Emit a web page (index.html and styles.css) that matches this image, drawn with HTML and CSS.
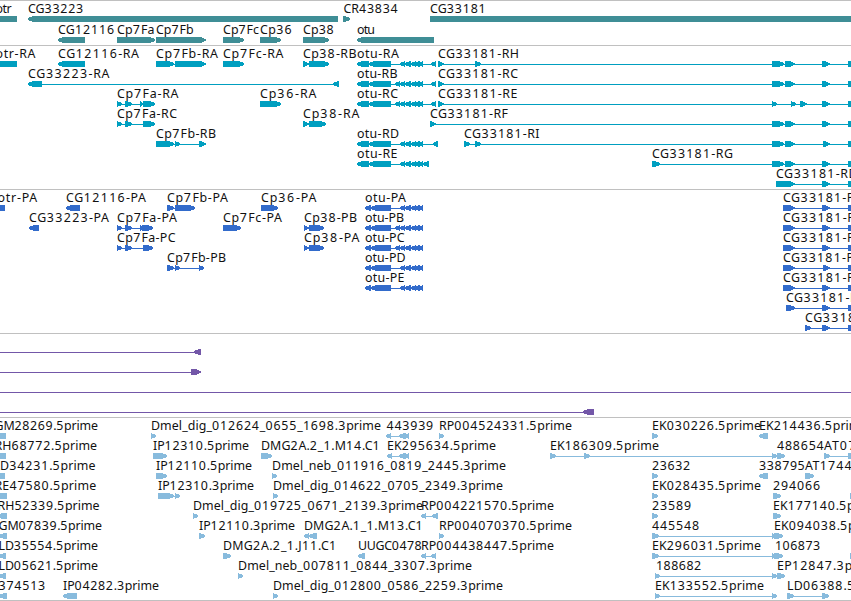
FILE: index.html
```html
<!DOCTYPE html>
<html lang="en">
<head>
<meta charset="utf-8">
<title>Genome browser</title>
<link rel="stylesheet" href="styles.css">
</head>
<body>
<main class="browser" id="browser"></main>
<script src="tracks.js"></script>
</body>
</html>
```
FILE: styles.css
```css
body {
  margin: 0;
  background: #fff;
}

.browser {
  display: flex;
  flex-direction: column;
  width: 851px;
  height: 601px;
  overflow: hidden;
  box-sizing: border-box;
  border-bottom: 1px solid #c0c0c0;
}

.track {
  display: flex;
  flex-direction: column;
  border-top: 1px solid #c0c0c0;
  padding: 1px 0 2px;
}

.row {
  display: block;
  width: 851px;
  height: 20px;
  overflow: visible;
  fill: currentColor;
}

.row path,
.row rect {
  shape-rendering: crispEdges;
}

.label {
  font: 12.4px "Noto Sans", "Open Sans", sans-serif;
  fill: #111;
}

.digits {
  letter-spacing: 0.8px;
}

.genes { color: #3f8e96; padding-bottom: 1px; }
.genes .row { height: 21px; }
.transcripts { color: #009fc0; }
.proteins { color: #326bcb; }
.inserts { color: #7357a8; }
.reads { color: #88bbdd; padding-bottom: 1px; }
```
FILE: tracks.js
```js
// Feature: "label labelStart labelEnd strand block,block,..."; a block is start:end.
const OTU = '357:369,369:391,';
const OTP = '365:371,371:391,';
const TAIL = '400:405,405:411,411:416,415:419.5,419:423';
const TAIL5 = '395:400,' + TAIL;
const END = '822:829.5,848:856';
const MID = '772:784,785:794.5,' + END;
const PEP = '783:785,784:794.5,' + END;

const tracks = [
  ['genes', [
    ['otr -4 11 < -10:17', 'CG33223 28.5 83.5 < 28:338', 'CR43834 344 398 > 343:350', 'CG33181 430.5 486 > 430:900'],
    ['CG12116 58.5 114.5 < 58:85', 'Cp7Fa 117.5 154 > 117:155', 'Cp7Fb 156.5 193 > 156:205.5', 'Cp7Fc 223.5 258.5 > 223:244', 'Cp36 260.5 292 > 260:281', 'Cp38 303.5 334 > 303:329', 'otu 357.5 374.5 < 357:434']
  ]],
  ['transcripts', [
    ['otr-RA -4 35 < -10:17', 'CG12116-RA 58.5 138.5 < 58:85', 'Cp7Fb-RA 156.5 217.5 > 156:174,175:205.5', 'Cp7Fc-RA 223.5 283 > 223:225,224:244', 'Cp38-RB 303.5 356 > 303:308.5,309:329', 'otu-RA 357.5 398.5 < ' + OTU + TAIL + ',431:436', 'CG33181-RH 438.5 518.5 > 438:443.5,475:481,' + MID],
    ['CG33223-RA 28.5 109 < 28:42,333:339', 'otu-RB 357.5 397 < ' + OTU + TAIL5 + ',431:436', 'CG33181-RC 438.5 517.5 > 438:443.5,' + MID],
    ['Cp7Fa-RA 117.5 178 > 117:122,125:132,140:143,143:155', 'Cp36-RA 260.5 316 > 260:262,261:281', 'otu-RC 357.5 397.5 < ' + OTU + TAIL5 + ',431:436', 'CG33181-RE 438.5 517 > 438:443.5,772:777,791:796,800:806.5,' + END],
    ['Cp7Fa-RC 117.5 176.5 > 117:122,125:132,143:155', 'Cp38-RA 303.5 359 > 303:308.5,309:326', 'CG33181-RF 430.5 507.5 > 430:435.5,' + MID],
    ['Cp7Fb-RB 156.5 215.5 > 156:174,175:180,199:205.5', 'otu-RD 357.5 398.5 < ' + OTU + TAIL + ',432.5:438', 'CG33181-RI 464.5 539 > 464:470,475:481,772:784,785:794.5,823:829.5,848:856'],
    ['otu-RE 357.5 397 < ' + OTU + TAIL + ',423:429', 'CG33181-RG 652.5 732.5 > 652:660,' + MID],
    ['CG33181-RD 776.5 857 > 776:794.5,' + END]
  ]],
  ['proteins', [
    ['otr-PA -2 36.7 < -10:5', 'CG12116-PA 66.5 145.5 < 66:80', 'Cp7Fb-PA 167.5 227.5 > 167:174,175:195', 'Cp36-PA 261.5 316 > 261:278', 'otu-PA 365.5 405.5 < ' + OTP + TAIL, 'CG33181-PH 783.5 863.5 > ' + PEP],
    ['CG33223-PA 29.5 108.5 < 29:39', 'Cp7Fa-PA 117.5 176.5 > 117:122,125:132,140:143,142:153', 'Cp7Fc-PA 223.5 281.5 > 223:241', 'Cp38-PB 304.5 356.5 > 304:308.5,308.5:324', 'otu-PB 365.5 403.5 < ' + OTP + TAIL5, 'CG33181-PC 783.5 862.5 > ' + PEP],
    ['Cp7Fa-PC 117.5 175 > 117:122,125:132,143:153', 'Cp38-PA 304.5 359 > 304:308.5,308.5:324', 'otu-PC 365.5 404 < ' + OTP + TAIL5, 'CG33181-PF 783.5 861 > ' + PEP],
    ['Cp7Fb-PB 167.5 225.5 > 167:174,175:180,199:204', 'otu-PD 365.5 405 < ' + OTP + TAIL, 'CG33181-PI 783.5 858 > 783:785,784:794.5,823:829.5,848:856'],
    ['otu-PE 365.5 404 < ' + OTP + TAIL, 'CG33181-PG 783.5 863.5 > ' + PEP],
    ['CG33181-PD 786.5 866.5 > 786:795,' + END],
    ['CG33181-PE 805.5 884 > 805:811,' + END]
  ]],
  ['inserts', [
    ['- 0 0 < -10:-5,194:201'],
    ['- 0 0 > -10:-5,191:200.5'],
    ['- 0 0 > -10:-5,860:870'],
    ['- 0 0 < -10:-5,583:593.5']
  ]],
  ['reads', [
    ['GM28269.5prime -5 97.5 < -10:6', 'Dmel_dig_012624_0655_1698.3prime 151.5 380.5 > 151:156', '443939 387 433.5 < 386:391,399:406,405:409', 'RP004524331.5prime 439.5 571.5 > 439:444', 'EK030226.5prime 652.5 760.5 > 652:658', 'EK214436.5prime 759.5 867 < 759:768'],
    ['RH68772.5prime -5 96.5 < -10:6', 'IP12310.5prime 153.5 248.5 > 153:167', 'DMG2A.2_1.M14.C1 261.5 380 > 261:272', 'EK295634.5prime 387.5 495.5 < 387:392,399:406,405:409', 'EK186309.5prime 550.5 658.5 > 550:556,584:590,772:777', '488654 777.5 824 > 777:785', 'AT07 824.5 856 > 824:830,848:856'],
    ['LD34231.5prime -6 95 < -10:5', 'IP12110.5prime 156.5 251.5 > 156:167', 'Dmel_neb_011916_0819_2445.3prime 272.5 505.5 > 272:277', '23632 652.5 690.5 > 652:658', '338795 759.5 805 < 759:768', 'AT1744 805.5 852 > 805:814'],
    ['RE47580.5prime -5 95.7 < -10:7', 'IP12310.3prime 158.5 253.5 > 158:174,175:180', 'Dmel_dig_014622_0705_2349.3prime 273.5 502.5 > 273:278', 'EK028435.5prime 652.5 760.5 > 652:658', '294066 773.5 820.5 > 773:781', '- 0 0 > 850:858'],
    ['RH52339.5prime -2 99 < -3:7', 'Dmel_dig_019725_0671_2139.3prime 193.5 422.5 > 193:198', 'RP004221570.5prime 421.5 553.5 < 421:426,432:438', '23589 652.5 691.5 > 652:658', 'EK177140.5prime 773.5 881.5 > 773:781'],
    ['GM07839.5prime -1 101.5 < -1:7', 'IP12110.3prime 199.5 294.5 > 199:205', 'DMG2A.1_1.M13.C1 304.5 423 < 304:309,309:317', 'RP004070370.5prime 439.5 571.5 > 439:444', '445548 652.5 699.5 > 652:659,772:777', 'EK094038.5prime 774.5 882.5 > 774:783'],
    ['LD35554.5prime -1 97.5 < -1:6', 'DMG2A.2_1.J11.C1 223.5 336.5 > 223:231', 'UUGC0478 358.5 422 < 358:365', 'RP004438447.5prime 421.5 553.5 < 421:426,431:436', 'EK296031.5prime 652.5 760.5 > 652:659,772:777', '106873 775.5 820.5 > 774:783', '- 0 0 > 850:858'],
    ['LD05621.5prime -1 97.5 < -1:6', 'Dmel_neb_007811_0844_3307.3prime 238.5 471.5 > 238:243', '188682 656.5 701.5 > 655:660,772:777', 'EP12847.3prime 777.5 880 > 777:785'],
    ['374513 -1 45.5 < -1:7', 'IP04282.3prime 63.5 158.5 < 63:77', 'Dmel_dig_012800_0586_2259.3prime 273.5 502.5 > 273:278', 'EK133552.5prime 655.5 763.5 > 655:660,772:777', 'LD06388.5prime 787.5 890 > 787:794,822:829']
  ]]
];

const BASELINE = 11, TOP = 14, BOTTOM = 20, MIDDLE = 17, TIP = 5;

// A bar whose leading end narrows to a blunt, two pixel high nose.
function blockPath(strand, a, b) {
  const tip = Math.min(TIP, b - a);
  const [flat, nose, neck] = strand === '>' ? [a, b, b - tip] : [b, a, a + tip];
  return `M${flat} ${TOP}H${neck}L${nose} ${MIDDLE - 1}V${MIDDLE + 1}L${neck} ${BOTTOM}H${flat}z`;
}

function feature(spec) {
  const [name, from, to, strand, list] = spec.split(' ');
  const blocks = list.split(',').map(s => s.split(':').map(Number));
  const start = blocks[0][0], end = blocks[blocks.length - 1][1];
  let out = '';
  if (blocks.length > 1) {
    out += `<rect x="${start + 2}" y="${MIDDLE}" width="${end - start - 3}" height="1"/>`;
  }
  out += blocks.map(([a, b]) => `<path d="${blockPath(strand, a, b)}"/>`).join('');
  if (name !== '-') {
    const text = name.replace(/\d+/g, d => `<tspan class="digits">${d}</tspan>`);
    out += `<text class="label" x="${from - 0.5}" y="${BASELINE}" textLength="${to - from + 1}">${text}</text>`;
  }
  return out;
}

document.getElementById('browser').innerHTML = tracks.map(([kind, rows]) =>
  `<section class="track ${kind}">` +
  rows.map(row => `<svg class="row">${row.map(feature).join('')}</svg>`).join('') +
  '</section>').join('');
```
